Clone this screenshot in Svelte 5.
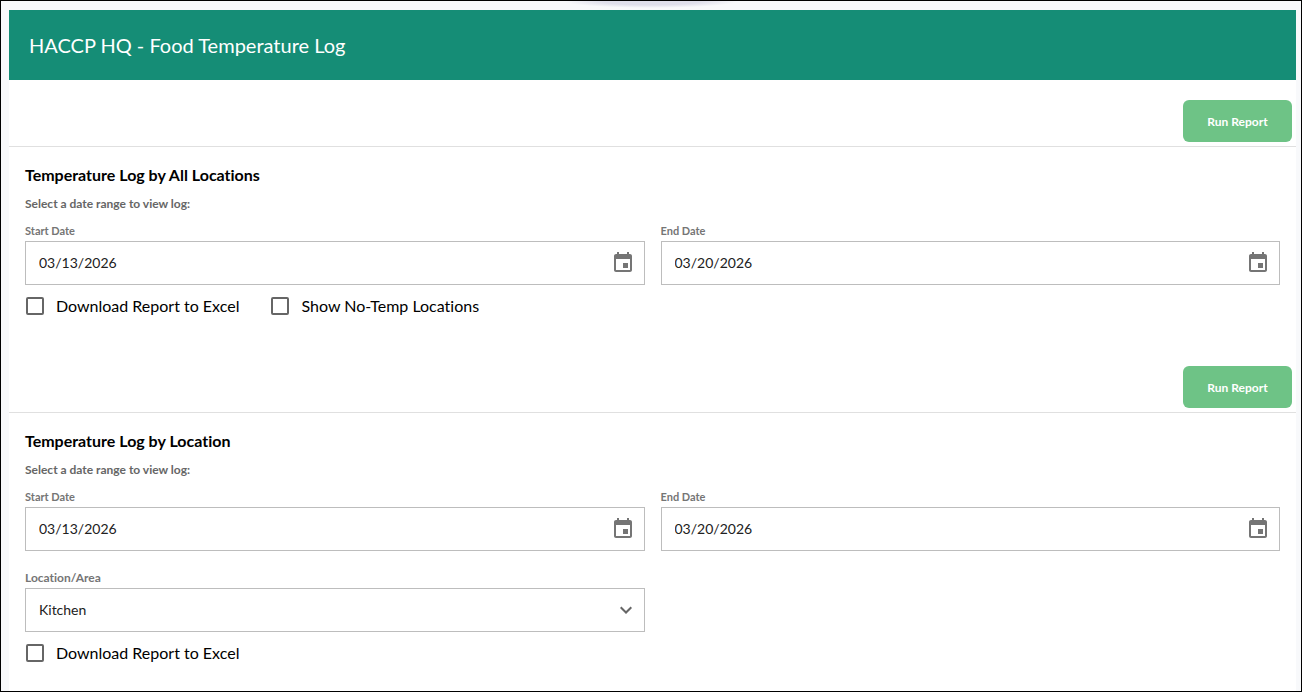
<script>
  let areas = ['Kitchen', 'Bar', 'Storage']

  let reports = [
    {
      id: 'all',
      title: 'Temperature Log by All Locations',
      start: '03/13/2026',
      end: '03/20/2026',
      options: [
        { name: 'excel', label: 'Download Report to Excel', checked: false },
        { name: 'notemp', label: 'Show No-Temp Locations', checked: false }
      ]
    },
    {
      id: 'single',
      title: 'Temperature Log by Location',
      start: '03/13/2026',
      end: '03/20/2026',
      area: 'Kitchen',
      options: [
        { name: 'excel', label: 'Download Report to Excel', checked: false }
      ]
    }
  ]

  const dateFields = [
    { key: 'start', label: 'Start Date' },
    { key: 'end', label: 'End Date' }
  ]
</script>

<div class="page">
  <div class="notch"></div>
  <main>
    <header>
      <h1>HACCP HQ - Food Temperature Log</h1>
    </header>

    {#each reports as report (report.id)}
      <section>
        <div class="toolbar">
          <button type="button" class="run">Run Report</button>
        </div>

        <div class="body">
          <h2>{report.title}</h2>
          <p>Select a date range to view log:</p>

          <div class="fields">
            {#each dateFields as field}
              <div class="field">
                <label for="{report.id}-{field.key}">{field.label}</label>
                <div class="control">
                  <input type="text" id="{report.id}-{field.key}" bind:value={report[field.key]} />
                  <button type="button" class="open" aria-label="Open calendar">
                    <svg width="24" height="24" viewBox="0 0 24 24" fill="currentColor">
                      <path d="M17 12h-5v5h5v-5zM16 1v2H8V1H6v2H5c-1.110 0-1.990.9-1.990 2L3 19c0 1.100.89 2 2 2h14c1.100 0 2-.9 2-2V5c0-1.100-.9-2-2-2h-1V1h-2zm3 18H5V8h14v11z" />
                    </svg>
                  </button>
                </div>
              </div>
            {/each}
          </div>

          {#if report.area}
            <div class="fields area">
              <div class="field">
                <label for="{report.id}-area">Location/Area</label>
                <div class="control">
                  <select id="{report.id}-area" bind:value={report.area}>
                    {#each areas as area}
                      <option value={area}>{area}</option>
                    {/each}
                  </select>
                  <svg class="arrow" width="12" height="8" viewBox="0 0 12 8" fill="none" stroke="currentColor" stroke-width="2">
                    <path d="M0.700 1.200L6 6.500l5.300-5.300" />
                  </svg>
                </div>
              </div>
            </div>
          {/if}

          <div class="options">
            {#each report.options as option}
              <label class="option">
                <input type="checkbox" name={option.name} bind:checked={option.checked} />
                <span>{option.label}</span>
              </label>
            {/each}
          </div>
        </div>
      </section>
    {/each}
  </main>
</div>

<style>
  .page {
    position: relative;
    box-sizing: border-box;
    min-height: 100vh;
    padding: 9px 5px 0 8px;
    display: flex;
    border: 1px solid #000;
    background: #f8f9fb;
    color: #000;
    font-family: Lato, "Liberation Sans", sans-serif;
    font-variant-ligatures: none;
  }
  /* soft shadow hanging from the top edge */
  .notch {
    position: absolute;
    top: 0;
    left: 50%;
    width: 176px;
    height: 7px;
    transform: translateX(-50%);
    background: radial-gradient(ellipse at top, #dfdfeb 40%, rgba(224, 224, 236, 0) 70%);
  }
  main {
    flex: 1;
    min-width: 0;
    background: #fff;
  }
  header {
    display: flex;
    align-items: center;
    height: 70px;
    padding: 0 20px;
    background: #158d76;
    color: #fff;
  }
  h1 {
    margin: 0;
    font-size: 20px;
    font-weight: 400;
    line-height: 28px;
  }

  .toolbar {
    display: flex;
    justify-content: flex-end;
    padding: 20px 4px 4px;
    border-bottom: 1px solid #e0e0e0;
  }
  .run {
    min-width: 109px;
    height: 42px;
    padding: 0 16px;
    border: none;
    border-radius: 6px;
    background: #6ec386;
    color: #fff;
    font: 700 12px Lato, "Liberation Sans", sans-serif;
    cursor: pointer;
  }

  .body {
    padding: 16px 16px 19px;
  }
  section:last-child .body {
    padding-bottom: 8px;
  }
  h2 {
    margin: 0;
    font-size: 16px;
    font-weight: 700;
    line-height: 24px;
  }
  p {
    margin: 9px 0 11px;
    color: #666;
    font-size: 12px;
    font-weight: 700;
    line-height: 16px;
  }

  .fields {
    display: grid;
    grid-template-columns: 1fr 1fr;
    gap: 16px;
  }
  .fields.area {
    margin-top: 19px;
  }
  .field label {
    display: block;
    margin-bottom: 2px;
    color: #757575;
    font-size: 11px;
    font-weight: 700;
    line-height: 16px;
  }
  .area .field label {
    font-size: 12px;
  }
  .control {
    display: flex;
    align-items: center;
    position: relative;
    box-sizing: border-box;
    height: 44px;
    border: 1px solid #bdbdbd;
  }
  .control input,
  .control select {
    flex: 1;
    box-sizing: border-box;
    min-width: 0;
    height: 100%;
    padding: 0 13px 2px;
    border: none;
    outline: none;
    appearance: none;
    background: none;
    color: #212121;
    font: 400 14px Lato, "Liberation Sans", sans-serif;
  }
  .open {
    display: flex;
    padding: 0;
    margin-right: 9px;
    border: none;
    background: none;
    color: #757575;
    cursor: pointer;
  }
  .arrow {
    position: absolute;
    right: 12px;
    color: #666;
    pointer-events: none;
  }

  .options {
    display: flex;
    gap: 32px;
    padding-left: 1px;
  }
  .option {
    display: flex;
    align-items: center;
    gap: 12px;
    height: 42px;
    font-size: 16px;
    cursor: pointer;
  }
  .option span {
    padding-bottom: 2px;
  }
  .option input {
    box-sizing: border-box;
    width: 18px;
    height: 18px;
    margin: 0;
    border: 2px solid #666;
    border-radius: 2px;
    appearance: none;
    background: #fff;
  }
  .option input:checked {
    border-color: #158d76;
    background: #158d76;
  }
</style>
